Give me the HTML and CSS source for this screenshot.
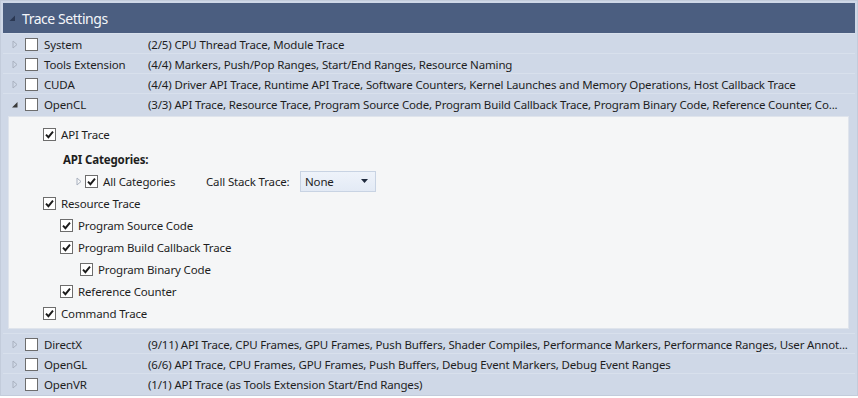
FILE: index.html
```html
<!DOCTYPE html>
<html>
<head>
<meta charset="utf-8">
<link rel="stylesheet" href="styles.css">
</head>
<body>
<div class="frame">
  <div class="header">
    <svg class="hdr-tri" width="7" height="7" viewBox="0 0 7 7"><polygon points="6,0.5 6,6 0.5,6" /></svg>
    <span class="hdr-title">Trace Settings</span>
  </div>

  <div class="row">
    <div class="name"><svg class="exp" width="6" height="9" viewBox="0 0 6 9"><polygon points="1,1 5,4.5 1,8"/></svg><span class="cb"></span><span class="lbl">System</span></div>
    <div class="desc">(2/5) CPU Thread Trace, Module Trace</div>
  </div>
  <div class="row">
    <div class="name"><svg class="exp" width="6" height="9" viewBox="0 0 6 9"><polygon points="1,1 5,4.5 1,8"/></svg><span class="cb"></span><span class="lbl">Tools Extension</span></div>
    <div class="desc">(4/4) Markers, Push/Pop Ranges, Start/End Ranges, Resource Naming</div>
  </div>
  <div class="row">
    <div class="name"><svg class="exp" width="6" height="9" viewBox="0 0 6 9"><polygon points="1,1 5,4.5 1,8"/></svg><span class="cb"></span><span class="lbl">CUDA</span></div>
    <div class="desc">(4/4) Driver API Trace, Runtime API Trace, Software Counters, Kernel Launches and Memory Operations, Host Callback Trace</div>
  </div>
  <div class="row">
    <div class="name"><svg class="exp open" width="6" height="9" viewBox="0 0 6 9"><polygon points="5.5,2 5.5,7.5 0,7.5"/></svg><span class="cb"></span><span class="lbl">OpenCL</span></div>
    <div class="desc">(3/3) API Trace, Resource Trace, Program Source Code, Program Build Callback Trace, Program Binary Code, Reference Counter, Co...</div>
  </div>

  <div class="panel">
    <div class="item lvl0"><span class="cb on"><svg width="11" height="11" viewBox="0 0 11 11"><path d="M2 5.6 L4.4 8.2 L9 2.6"/></svg></span><span class="lbl">API Trace</span></div>
    <div class="item cat-title">API Categories:</div>
    <div class="item cat-row">
      <svg class="exp" width="6" height="9" viewBox="0 0 6 9"><polygon points="1,1 5,4.5 1,8"/></svg>
      <span class="cb on"><svg width="11" height="11" viewBox="0 0 11 11"><path d="M2 5.6 L4.4 8.2 L9 2.6"/></svg></span><span class="lbl cat-lbl">All Categories</span>
      <span class="cst">Call Stack Trace:</span>
      <span class="dropdown"><span>None</span><svg width="7" height="4" viewBox="0 0 7 4"><polygon points="0,0 7,0 3.5,4"/></svg></span>
    </div>
    <div class="item lvl0"><span class="cb on"><svg width="11" height="11" viewBox="0 0 11 11"><path d="M2 5.6 L4.4 8.2 L9 2.6"/></svg></span><span class="lbl">Resource Trace</span></div>
    <div class="item lvl1"><span class="cb on"><svg width="11" height="11" viewBox="0 0 11 11"><path d="M2 5.6 L4.4 8.2 L9 2.6"/></svg></span><span class="lbl">Program Source Code</span></div>
    <div class="item lvl1"><span class="cb on"><svg width="11" height="11" viewBox="0 0 11 11"><path d="M2 5.6 L4.4 8.2 L9 2.6"/></svg></span><span class="lbl">Program Build Callback Trace</span></div>
    <div class="item lvl2"><span class="cb on"><svg width="11" height="11" viewBox="0 0 11 11"><path d="M2 5.6 L4.4 8.2 L9 2.6"/></svg></span><span class="lbl">Program Binary Code</span></div>
    <div class="item lvl1"><span class="cb on"><svg width="11" height="11" viewBox="0 0 11 11"><path d="M2 5.6 L4.4 8.2 L9 2.6"/></svg></span><span class="lbl">Reference Counter</span></div>
    <div class="item lvl0"><span class="cb on"><svg width="11" height="11" viewBox="0 0 11 11"><path d="M2 5.6 L4.4 8.2 L9 2.6"/></svg></span><span class="lbl">Command Trace</span></div>
  </div>

  <div class="row">
    <div class="name"><svg class="exp" width="6" height="9" viewBox="0 0 6 9"><polygon points="1,1 5,4.5 1,8"/></svg><span class="cb"></span><span class="lbl">DirectX</span></div>
    <div class="desc">(9/11) API Trace, CPU Frames, GPU Frames, Push Buffers, Shader Compiles, Performance Markers, Performance Ranges, User Annot...</div>
  </div>
  <div class="row">
    <div class="name"><svg class="exp" width="6" height="9" viewBox="0 0 6 9"><polygon points="1,1 5,4.5 1,8"/></svg><span class="cb"></span><span class="lbl">OpenGL</span></div>
    <div class="desc">(6/6) API Trace, CPU Frames, GPU Frames, Push Buffers, Debug Event Markers, Debug Event Ranges</div>
  </div>
  <div class="row last">
    <div class="name"><svg class="exp" width="6" height="9" viewBox="0 0 6 9"><polygon points="1,1 5,4.5 1,8"/></svg><span class="cb"></span><span class="lbl">OpenVR</span></div>
    <div class="desc">(1/1) API Trace (as Tools Extension Start/End Ranges)</div>
  </div>
</div>
</body>
</html>
```

FILE: styles.css
```css
html, body {
  margin: 0;
  padding: 0;
  background: #ffffff;
}
body {
  font-family: "Noto Sans", "Open Sans", sans-serif;
  font-size: 11.5px;
  letter-spacing: -0.15px;
  color: #1e1e1e;
}
.frame {
  width: 852px;
  height: 390px;
  border: 1px solid #c3ccdb;
  background: #cfd8e7;
  padding: 2px;
  overflow: hidden;
}
.header {
  height: 30px;
  background: #4b5e80;
  display: flex;
  align-items: center;
  padding-left: 6px;
}
.hdr-tri polygon { fill: #2b3852; }
.hdr-title {
  color: #f4f6fa;
  font-size: 14px;
  margin-left: 6px;
  letter-spacing: -0.45px;
  padding-top: 1px;
}
.row {
  height: 20px;
  box-sizing: border-box;
  border-top: 1px solid #d8e0ec;
  padding-top: 1px;
  display: flex;
  align-items: center;
}
.name {
  width: 145px;
  flex: none;
  display: flex;
  align-items: center;
}
.exp {
  flex: none;
}
.name .exp { margin-left: 9px; }
.exp polygon {
  fill: none;
  stroke: #a9b1bf;
  stroke-width: 1;
}
.exp.open polygon {
  fill: #3a3a3a;
  stroke: none;
}
.cb {
  width: 11px;
  height: 11px;
  border: 1px solid #6d6d6d;
  background: #ffffff;
  flex: none;
  display: inline-flex;
  align-items: center;
  justify-content: center;
}
.name .cb { margin-left: 7px; }
.cb svg path {
  fill: none;
  stroke: #1a1a1a;
  stroke-width: 1.9;
}
.lbl {
  margin-left: 6px;
  white-space: nowrap;
}
.desc {
  flex: 1;
  min-width: 0;
  white-space: nowrap;
  overflow: hidden;
}
.panel {
  margin: 3px 6px 4px 5px;
  background: #f5f6f7;
  border: 1px solid #dfe4ec;
  padding: 6px 0 5px 0;
  height: 200px;
}
.item {
  height: 22px;
  display: flex;
  align-items: center;
}
.lvl0 { padding-left: 34px; }
.lvl1 { padding-left: 51px; }
.lvl2 { padding-left: 71px; }
.item .lbl { margin-left: 5px; }
.cat-title {
  padding-left: 54px;
  font-weight: bold;
  margin-top: 3px;
}
.cat-row { padding-left: 67px; }
.cat-row .cb { margin-left: 3px; }
.cat-row .cat-lbl { width: 100px; }
.cst { margin-left: 3px; width: 94px; white-space: nowrap; }
.dropdown {
  height: 21px;
  width: 76px;
  border: 1px solid #c8d3e3;
  background: linear-gradient(#eef3fa, #e3eaf5);
  display: inline-flex;
  align-items: center;
  justify-content: space-between;
  padding: 0 7px 0 4px;
  box-sizing: border-box;
}
.dropdown polygon { fill: #1f2a3d; }
```
